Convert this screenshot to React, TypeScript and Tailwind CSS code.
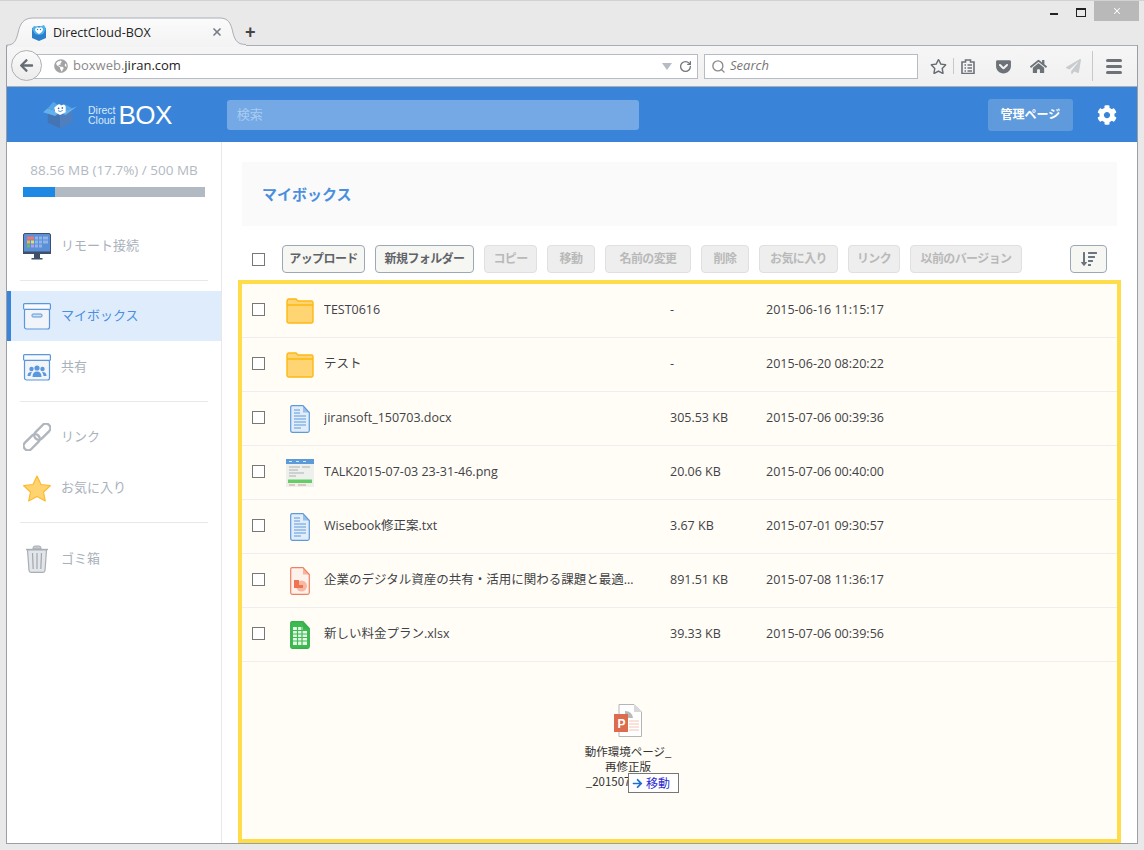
import { FaArrowLeft, FaCog, FaGetPocket, FaGlobeAmericas, FaHome, FaPaperPlane, FaRegStar, FaSortAmountDown } from 'react-icons/fa'
import { RotateCw, Search, X } from 'lucide-react'

const font = 'font-["Open_Sans","Noto_Sans_CJK_JP",sans-serif]'

const TOOLBAR_BUTTONS = [
    { label: 'コピー', width: 'w-[53px]' },
    { label: '移動', width: 'w-[48px]' },
    { label: '名前の変更', width: 'w-[86px]' },
    { label: '削除', width: 'w-[48px]' },
    { label: 'お気に入り', width: 'w-[79px]' },
    { label: 'リンク', width: 'w-[52px]' },
    { label: '以前のバージョン', width: 'w-[112px]' },
]

const FolderIcon = () => (
    <svg width="28" height="26" viewBox="0 0 28 26">
        <path d="M1 4 Q1 1 3 1 H10 L12 3 H26 Q27 3 27 5 V23 Q27 25 25 25 H3 Q1 25 1 23 Z" fill="#ffd573" stroke="#fdb813" strokeWidth="1.4" />
        <path d="M1 7 H27" stroke="#fdb813" strokeWidth="1.6" />
    </svg>
)

const DocIcon = ({ stroke, fill, children }: { stroke: string; fill: string; children?: React.ReactNode }) => (
    <svg width="20" height="28" viewBox="0 0 20 28">
        <path d="M2 .7 H13 L19.3 7.5 V25.5 Q19.3 27.3 17.5 27.3 H2.5 Q.7 27.3 .7 25.5 V2.5 Q.7 .7 2 .7 Z" fill={fill} stroke={stroke} strokeWidth="1.2" />
        <path d="M13 .7 V7.5 H19.3 Z" fill={stroke} opacity="0.55" />
        {children}
    </svg>
)

const WordIcon = () => (
    <DocIcon stroke="#5b9bdc" fill="#e3edf9">
        <path d="M4 5 H10 M4 8 H10 M4 11 H16 M4 14 H16 M4 17 H16 M4 20 H16 M4 23 H11" stroke="#5b9bdc" strokeWidth="1" />
    </DocIcon>
)

const PptIcon = () => (
    <DocIcon stroke="#f0805f" fill="#fdf1ec">
        <circle cx="11.5" cy="19" r="5.5" fill="#f9b8a4" />
        <path d="M4 13 H9 V18 H13 V21 H4 Z" fill="#ee7350" />
    </DocIcon>
)

const ExcelIcon = () => (
    <DocIcon stroke="#36ae4a" fill="#3dbb50">
        <path d="M3 6 H13 V9 H17 V24 H3 Z" fill="#e7f6e9" />
        <path d="M3 9.5 H17 M3 13 H17 M3 16.5 H17 M3 20 H17 M7.5 6 V24 M12 6 V24" stroke="#3dbb50" strokeWidth="1.2" />
    </DocIcon>
)

const ThumbIcon = () => (
    <svg width="28" height="28" viewBox="0 0 28 28">
        <rect width="28" height="28" fill="#eef0ee" />
        <rect width="28" height="5" fill="#5a9bd8" />
        <path d="M3 2.5 H6 M10 2.5 H13 M17 2.5 H20" stroke="#d9e9f7" strokeWidth="1.2" />
        <path d="M3 8 H14 M16 8 H24 M3 11 H12 M3 14 H18 M3 17 H10" stroke="#aab2b0" strokeWidth="1" />
        <rect x="2" y="20.5" width="24" height="3.5" fill="#66cc66" />
        <path d="M3 26 H9 M12 26 H20" stroke="#d09a9a" strokeWidth="1" />
    </svg>
)

const FILES = [
    { name: 'TEST0616', size: '-', date: '2015-06-16 11:15:17', icon: <FolderIcon /> },
    { name: 'テスト', size: '-', date: '2015-06-20 08:20:22', icon: <FolderIcon /> },
    { name: 'jiransoft_150703.docx', size: '305.53 KB', date: '2015-07-06 00:39:36', icon: <WordIcon /> },
    { name: 'TALK2015-07-03 23-31-46.png', size: '20.06 KB', date: '2015-07-06 00:40:00', icon: <ThumbIcon /> },
    { name: 'Wisebook修正案.txt', size: '3.67 KB', date: '2015-07-01 09:30:57', icon: <WordIcon /> },
    { name: '企業のデジタル資産の共有・活用に関わる課題と最適解と…', size: '891.51 KB', date: '2015-07-08 11:36:17', icon: <PptIcon /> },
    { name: '新しい料金プラン.xlsx', size: '39.33 KB', date: '2015-07-06 00:39:56', icon: <ExcelIcon /> },
]

const MonitorIcon = () => (
    <svg width="28" height="27" viewBox="0 0 28 27">
        <rect x=".5" y=".5" width="27" height="20" rx="1.5" fill="#5b8fd8" stroke="#3f5168" />
        <rect x="0" y="18.5" width="28" height="2.5" fill="#3f5168" />
        <rect x="4" y="3.5" width="7" height="3" fill="#f0776c" />
        <rect x="4" y="7.5" width="3" height="3" fill="#f5b14a" />
        <rect x="8" y="7.5" width="3" height="3" fill="#dfe06a" />
        <rect x="4" y="11.5" width="3" height="3" fill="#6dbb5f" />
        <rect x="8" y="11.5" width="3" height="3" fill="#b89ae8" />
        <path d="M12 3.5 H15 V6.5 H12 Z M16 3.5 H19 V6.5 H16 Z M20 3.5 H25 V6.5 H20 Z M12 7.5 H15 V10.5 H12 Z M16 7.5 H19 V10.5 H16 Z M20 7.5 H25 V10.5 H20 Z M12 11.5 H15 V14.5 H12 Z M16 11.5 H19 V14.5 H16 Z" fill="#8fb4e6" />
        <rect x="11" y="21" width="6" height="4" fill="#3f5168" />
        <rect x="8.5" y="25" width="11" height="1.5" fill="#3f5168" />
    </svg>
)

const BoxIcon = ({ children }: { children?: React.ReactNode }) => (
    <svg width="28" height="27" viewBox="0 0 28 27">
        <rect x="1.5" y="6" width="25" height="20" rx="2" fill="#f1f4f9" stroke="#5b97dd" strokeWidth="1.2" />
        <rect x=".6" y=".6" width="26.8" height="5.8" rx="1" fill="#f8fafc" stroke="#5b97dd" strokeWidth="1.2" />
        {children}
    </svg>
)

const LinkIcon = () => (
    <svg width="28" height="28" viewBox="0 0 28 28" fill="none">
        <g transform="rotate(-45 14 14)" stroke="#b1b6bd" strokeWidth="2.4">
            <rect x="-3" y="9.5" width="19" height="9" rx="4.5" />
            <rect x="12" y="9.5" width="19" height="9" rx="4.5" />
        </g>
    </svg>
)

const StarIcon = () => (
    <svg width="28" height="27" viewBox="0 0 28 27">
        <path d="M14 1 L18 9.5 L27.3 10.7 L20.5 17 L22.3 26 L14 21.5 L5.7 26 L7.5 17 L.7 10.7 L10 9.5 Z" fill="#ffd470" stroke="#fdb92e" strokeWidth="1.2" strokeLinejoin="round" />
    </svg>
)

const TrashIcon = () => (
    <svg width="24" height="28" viewBox="0 0 24 28" fill="none">
        <path d="M8 3 Q8 1 10 1 H14 Q16 1 16 3 V4 H8 Z" fill="#c6cad0" stroke="#a9aeb5" />
        <path d="M1 4.5 H23" stroke="#a9aeb5" strokeWidth="1.4" />
        <path d="M2.5 5 L4 25.5 Q4.2 27.4 6 27.4 H18 Q19.8 27.4 20 25.5 L21.5 5 Z" fill="#e2e5e9" stroke="#a9aeb5" strokeWidth="1.2" />
        <path d="M7.5 8 L8.2 24 M12 8 V24 M16.5 8 L15.8 24" stroke="#a2a7ae" strokeWidth="1.2" />
    </svg>
)

const LogoIcon = () => (
    <svg width="36" height="29" viewBox="0 0 36 29">
        <path d="M18 11 L31 8 V23 L18 29 L5 23 V8 Z" fill="#4f7fbe" />
        <path d="M18 12 L5 8 V23 L18 29 Z" fill="#4375b5" />
        <path d="M5 8 L0 12 L13 16 L18 12 Z" fill="#62b0ec" />
        <path d="M31 8 L36 6 L24 15 L18 12 Z" fill="#62b0ec" />
        <path d="M5 8 L11 1 L18 6 L22 3 L31 8 L18 12 Z" fill="#55a6e6" />
        <path d="M12 7 L16 4 Q18 3 19 5 Q23 3 24 6 L24 12 L18 15 L13 12 Z" fill="#ffffff" />
        <circle cx="16.5" cy="8" r=".9" fill="#2e6db0" />
        <circle cx="20.5" cy="7.5" r=".9" fill="#2e6db0" />
        <path d="M16 10.5 Q18.5 12.5 21 10" stroke="#2e6db0" fill="none" strokeWidth=".8" />
    </svg>
)

const Favicon = () => (
    <svg width="16" height="16" viewBox="0 0 16 16">
        <path d="M1 3 L8 1 L15 3 V13 L8 16 L1 13 Z" fill="#2d7fc9" />
        <path d="M1 4 L3 1 L8 2 L13 0 L15 4 L12 9 L8 10 L4 9 Z" fill="#4fb1ec" />
        <path d="M4 4 Q6 1 8 3 Q11 1 12 4 Q12 7 8 9 Q4 7 4 4 Z" fill="#ffffff" />
        <circle cx="6.5" cy="4.5" r=".7" fill="#2d7fc9" />
        <circle cx="9.5" cy="4.5" r=".7" fill="#2d7fc9" />
    </svg>
)

const GhostPptIcon = () => (
    <svg width="28" height="33" viewBox="0 0 28 33">
        <path d="M5 .5 H20 L27.5 8 V32.5 H5 Z" fill="#ffffff" stroke="#b5b5b5" />
        <path d="M20 .5 V8 H27.5 Z" fill="#d8d8d8" />
        <path d="M11 7 A7.5 7.5 0 0 1 19 14 H11 Z" fill="#b9b9b9" />
        <path d="M15 17 H25 M15 20 H25 M15 23 H25 M15 26 H25" stroke="#f3c4b5" strokeWidth="1" />
        <rect y="10" width="14" height="18" fill="#dd6b4d" />
        <text x="3.5" y="24" fontSize="12" fontWeight="700" fill="#ffffff" fontFamily="Liberation Sans">P</text>
    </svg>
)

const SidebarRow = ({ icon, label, active, className }: { icon: React.ReactNode; label: string; active?: boolean; className?: string }) => (
    <div className={`flex h-[50px] items-center ${active ? 'border-l-4 border-[#3a85d9] bg-[#deecfc] pl-[12px] text-[#4a8fdd]' : 'pl-[16px] text-[#a9b1bb]'} ${className ?? ''}`}>
        <span className="flex w-[28px] justify-center">{icon}</span>
        <span className="ml-[10px] text-[13px]">{label}</span>
    </div>
)

const App = () => {
    return (
        <div className={`flex h-[850px] w-[1144px] flex-col overflow-hidden border-t border-[#d2d2d2] bg-[#e9e9e9] ${font}`}>
            {/* window title bar with the tab */}
            <div className="relative z-10 flex h-[44px] shrink-0">
                <svg className="absolute top-[16px] left-[6px]" width="240" height="30" viewBox="0 0 240 30">
                    <defs>
                        <linearGradient id="tabFill" x1="0" y1="0" x2="0" y2="1">
                            <stop offset="0" stopColor="#fbfbfb" />
                            <stop offset="1" stopColor="#f3f3f3" />
                        </linearGradient>
                    </defs>
                    <path d="M1 30 V28 C8 28 10 24 12 16 C14 6 18 1 27 1 H214 C222 1 225 6 227 16 C229 24 232 27.5 240 27.5 V30 Z" fill="url(#tabFill)" />
                    <path d="M1 30 V28 C8 28 10 24 12 16 C14 6 18 1 27 1 H214 C222 1 225 6 227 16 C229 24 232 27.5 240 27.5" fill="none" stroke="#a9aeb6" />
                </svg>
                <div className="absolute top-[23px] left-[31px] flex items-center">
                    <Favicon />
                    <span className="ml-[6px] font-['Open_Sans'] text-[12.5px] text-[#222]">DirectCloud-BOX</span>
                </div>
                <X className="absolute top-[25px] left-[211px] text-[#7b8087]" size={12} strokeWidth={3.5} />
                <span className="absolute top-[24px] left-[245px] h-[14px] w-[11px] font-['Liberation_Sans'] text-[18px] leading-[14px] font-bold text-[#444]">+</span>
                <div className="ml-auto flex h-[21px] items-start">
                    <span className="mt-[12px] h-[2px] w-[8px] bg-[#222]" />
                    <span className="mt-[7px] ml-[18px] h-[9px] w-[10px] border border-t-2 border-[#222]" />
                    <span className="ml-[8px] flex h-[20px] w-[45px] items-center justify-center bg-[#b9b9b9] text-white">
                        <X size={10} strokeWidth={2.5} />
                    </span>
                    <span className="w-[5px]" />
                </div>
            </div>

            <div className="mx-[6px] flex h-[799px] flex-col border-x border-b border-[#9a9fa6]">
                {/* browser toolbar */}
                <div className="relative flex h-[42px] shrink-0 items-center border-y border-t-[#a9aeb6] border-b-[#a9aeb6] bg-gradient-to-b from-[#f6f6f6] to-[#f0f0f0]">
                    <span className="absolute top-[4px] left-[4px] z-10 flex h-[31px] w-[31px] items-center justify-center rounded-full border border-[#b0b0b0] bg-gradient-to-b from-[#fafafa] to-[#ececec] text-[#666c73]">
                        <FaArrowLeft size={15} />
                    </span>
                    <div className="ml-[26px] flex h-[25px] w-[665px] items-center border border-[#b5bcc6] bg-white pl-[20px]">
                        <FaGlobeAmericas className="text-[#a3a3a3]" size={14} />
                        <span className="ml-[5px] text-[13px] text-[#8a8a8a]">
                            boxweb.<span className="text-[#222]">jiran.com</span>
                        </span>
                        <span className="ml-auto h-0 w-0 border-x-[5px] border-t-[7px] border-x-transparent border-t-[#b5bcc6]" />
                        <RotateCw className="mr-[5px] ml-[7px] text-[#71767d]" size={13} strokeWidth={2.4} />
                    </div>
                    <div className="ml-[6px] flex h-[25px] w-[214px] items-center border border-[#b5bcc6] bg-white pl-[6px]">
                        <Search className="text-[#8b8b8b]" size={15} strokeWidth={2.2} />
                        <span className="ml-[4px] text-[13px] text-[#777] italic">Search</span>
                    </div>
                    <FaRegStar className="ml-[12px] text-[#676c73]" size={17} />
                    <span className="ml-[6px] h-[16px] w-px bg-[#c5c8cc]" />
                    <svg className="ml-[7px]" width="14" height="15" viewBox="0 0 14 15">
                        <path d="M1 3 H4.5 V1 H9.5 V3 H13 V14.5 H1 Z" fill="none" stroke="#6d7278" strokeWidth="1.6" />
                        <path d="M3.5 6 H5 M6.5 6 H11 M3.5 9 H5 M6.5 9 H11 M3.5 12 H5 M6.5 12 H11" stroke="#6d7278" strokeWidth="1.5" />
                    </svg>
                    <FaGetPocket className="ml-[20px] text-[#6d7278]" size={17} />
                    <FaHome className="ml-[18px] text-[#6d7278]" size={17} />
                    <FaPaperPlane className="ml-[19px] text-[#c9cccf]" size={15} />
                    <span className="ml-[11px] h-[30px] w-px bg-[#c5c9ce]" />
                    <span className="ml-[13px] flex w-[16px] flex-col gap-[3px]">
                        <span className="h-[3px] rounded-sm bg-[#6d7278]" />
                        <span className="h-[3px] rounded-sm bg-[#6d7278]" />
                        <span className="h-[3px] rounded-sm bg-[#6d7278]" />
                    </span>
                </div>

                {/* app header */}
                <div className="flex h-[55px] shrink-0 items-center bg-[#3984d9] text-white">
                    <span className="ml-[36px] flex w-[34px] justify-center">
                        <LogoIcon />
                    </span>
                    <span className="ml-[11px] flex flex-col font-['Liberation_Sans'] text-[10.5px] leading-[10px] text-[#dbe9f9]">
                        <span>Direct</span>
                        <span>Cloud</span>
                    </span>
                    <span className="ml-[3px] font-['Liberation_Sans'] text-[26px] leading-none tracking-[-0.5px]">BOX</span>
                    <div className="ml-[55px] flex h-[30px] w-[412px] items-center rounded-[3px] bg-[#74a9e6] pl-[10px] text-[13px] text-[#a8cbf0]">検索</div>
                    <button className="ml-auto flex h-[32px] w-[85px] items-center justify-center rounded-[3px] bg-[#5f9bdc] text-[12px] font-bold">管理ページ</button>
                    <FaCog className="mr-[20px] ml-[24px]" size={20} />
                </div>

                <div className="flex min-h-0 flex-1 bg-white">
                    {/* sidebar */}
                    <aside className="flex w-[215px] shrink-0 flex-col border-r border-[#e8e8e8]">
                        <div className="px-[16px] pt-[19px]">
                            <p className="w-[182px] text-center text-[13.5px] leading-[18px] text-[#b2b9c2]">88.56 MB (17.7%) / 500 MB</p>
                            <div className="mt-[8px] h-[10px] w-[182px] bg-[#b1b9c2]">
                                <div className="h-full w-[32px] bg-[#1e88e5]" />
                            </div>
                        </div>
                        <SidebarRow className="mt-[24px]" icon={<MonitorIcon />} label="リモート接続" />
                        <div className="mx-[13px] mt-[9px] border-t border-[#e8e8e8]" />
                        <SidebarRow className="mt-[10px]" active icon={<BoxIcon><rect x="9" y="11" width="10" height="3" rx="1" fill="#cfe0f5" stroke="#5b97dd" /></BoxIcon>} label="マイボックス" />
                        <SidebarRow
                            className="mt-px"
                            icon={
                                <BoxIcon>
                                    <circle cx="14" cy="14" r="2.6" fill="#5b97dd" />
                                    <circle cx="8.5" cy="15" r="2.2" fill="#5b97dd" />
                                    <circle cx="19.5" cy="15" r="2.2" fill="#5b97dd" />
                                    <path d="M9.5 23 Q9.5 17.5 14 17.5 Q18.5 17.5 18.5 23 Z M4.5 22 Q4.5 18 8.5 18 L9 18 Q7.5 20 7.5 22 Z M23.5 22 Q23.5 18 19.5 18 L19 18 Q20.5 20 20.5 22 Z" fill="#5b97dd" />
                                </BoxIcon>
                            }
                            label="共有"
                        />
                        <div className="mx-[13px] mt-[9px] border-t border-[#e8e8e8]" />
                        <SidebarRow className="mt-[10px]" icon={<LinkIcon />} label="リンク" />
                        <SidebarRow className="mt-px" icon={<StarIcon />} label="お気に入り" />
                        <div className="mx-[13px] mt-[9px] border-t border-[#e8e8e8]" />
                        <SidebarRow className="mt-[11px]" icon={<TrashIcon />} label="ゴミ箱" />
                    </aside>

                    {/* main */}
                    <main className="flex min-w-0 flex-1 flex-col px-[20px] pt-[20px] text-[#3f4347]">
                        <div className="flex h-[64px] shrink-0 items-center bg-[#fafafa] pl-[20px] text-[15px] font-bold text-[#4a8fdd]">マイボックス</div>
                        <div className="mt-[19px] flex h-[28px] shrink-0 items-center">
                            <input type="checkbox" className="ml-[10px] h-[13px] w-[13px] appearance-none border border-[#777] bg-white" />
                            <button className="ml-[17px] flex h-[28px] w-[83px] items-center justify-center rounded-[4px] border border-[#9aa8b8] bg-[#f6f6f2] text-[12px] font-bold tracking-[-0.6px] text-[#5f6368]">アップロード</button>
                            <button className="ml-[10px] flex h-[28px] w-[99px] items-center justify-center rounded-[4px] border border-[#9aa8b8] bg-[#f6f6f2] text-[12px] font-bold tracking-[-0.6px] text-[#5f6368]">新規フォルダー</button>
                            {TOOLBAR_BUTTONS.map((item) => (
                                <button
                                    key={item.label}
                                    className={`ml-[10px] flex h-[28px] items-center justify-center rounded-[4px] border border-[#e0e0e0] bg-[#eeeeee] text-[12px] font-bold tracking-[-0.6px] text-[#b9b9b9] ${item.width}`}
                                >
                                    {item.label}
                                </button>
                            ))}
                            <button className="ml-auto mr-[10px] flex h-[28px] w-[37px] items-center justify-center rounded-[4px] border border-[#9aa8b8] bg-[#f6f6f2] text-[#6b7480]">
                                <FaSortAmountDown size={16} />
                            </button>
                        </div>

                        <div className="relative -mx-[4px] mt-[7px] min-h-0 flex-1 border-4 border-[#ffdd4a] bg-[#fffdf6]">
                            {FILES.map((file) => (
                                <div key={file.name} className="flex h-[54px] items-center border-b border-[#eeeeee] pl-[10px] text-[12.5px]">
                                    <input type="checkbox" className="-mt-[2px] h-[13px] w-[13px] appearance-none border border-[#777] bg-white" />
                                    <span className="ml-[21px] flex w-[28px] justify-center">{file.icon}</span>
                                    <span className="ml-[10px] w-[312px] truncate">{file.name}</span>
                                    <span className="ml-[34px] w-[96px]">{file.size}</span>
                                    <span>{file.date}</span>
                                </div>
                            ))}

                            {/* file being dragged in */}
                            <div className="absolute top-[420px] left-[336px] flex w-[100px] flex-col items-center font-['Noto_Sans_CJK_JP'] text-[11.5px] leading-[15px] text-[#333]">
                                <GhostPptIcon />
                                <span className="mt-[7px] whitespace-nowrap">動作環境ページ_</span>
                                <span>再修正版</span>
                                <span>_20150716.pptx</span>
                            </div>
                            <div className="absolute top-[489px] left-[386px] flex h-[20px] w-[51px] items-center border border-[#777] bg-white pl-[3px] font-['Noto_Sans_CJK_JP'] text-[12px] text-[#2a2ad0]">
                                <FaArrowLeft className="rotate-180 text-[#1c6fd1]" size={11} />
                                <span className="ml-[3px]">移動</span>
                            </div>
                        </div>
                    </main>
                </div>
            </div>
        </div>
    )
}

export default App
